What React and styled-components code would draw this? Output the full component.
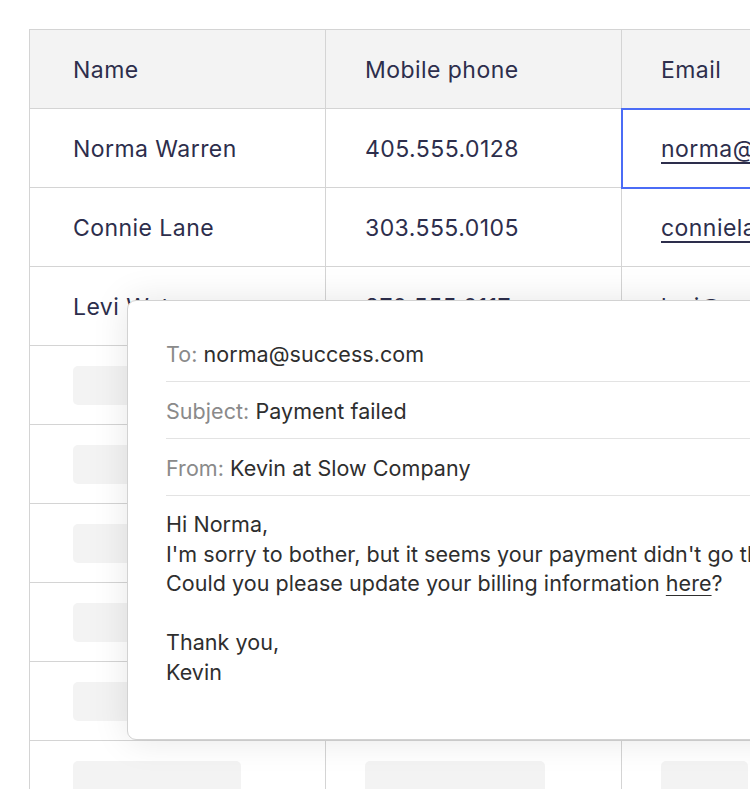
import React from "react";
import styled, { createGlobalStyle } from "styled-components";

const Global = createGlobalStyle`
  html, body { margin: 0; padding: 0; background: #ffffff; }
  body { font-family: Inter, "Noto Sans", sans-serif; }
  * { box-sizing: border-box; }
`;

const Page = styled.div`
  position: relative;
  width: 750px;
  height: 789px;
  overflow: hidden;
  padding: 29px 0 0 29px;
`;

const Table = styled.div`
  display: grid;
  grid-template-columns: repeat(3, 296px);
  width: max-content;
  border-top: 1px solid #d4d4d4;
  border-left: 1px solid #d4d4d4;
`;

const Cell = styled.div`
  position: relative;
  height: 79px;
  display: flex;
  align-items: center;
  padding: 1px 20px 0 ${(p) => (p.$first ? 43 : 39)}px;
  border-right: 1px solid #d4d4d4;
  border-bottom: 1px solid #d4d4d4;
  background: ${(p) => (p.$head ? "#f3f3f3" : "#ffffff")};
  color: #2d2e4c;
  font-size: 23px;
  letter-spacing: 0.45px;
  white-space: nowrap;
  ${(p) =>
    p.$selected &&
    `
    z-index: 1;
    outline: 2px solid #4b6cf6;
    outline-offset: -1px;
  `}
`;

const EmailLink = styled.span`
  text-decoration: underline;
  text-decoration-thickness: 1.5px;
  text-underline-offset: 5px;
`;

const Skeleton = styled.div`
  width: ${(p) => p.$w}px;
  height: 39px;
  border-radius: 5px;
  background: #f3f3f3;
`;

const Popup = styled.div`
  position: absolute;
  left: 127px;
  top: 300px;
  width: 720px;
  height: 440px;
  background: #ffffff;
  border: 1px solid #d2d2d2;
  border-radius: 9px;
  box-shadow: 0 0 36px rgba(0, 0, 0, 0.1);
  padding: 24px 0 0 38px;
  font-family: Inter, "Noto Sans", sans-serif;
  font-size: 21.5px;
  letter-spacing: 0.05px;
  color: #2e2e2e;
  z-index: 5;
`;

const Field = styled.div`
  padding: 17px 0 15px;
  line-height: 24px;
  border-bottom: 1px solid #e3e3e3;
  white-space: nowrap;
`;

const Label = styled.span`
  color: #8a8a8a;
`;

const Body = styled.div`
  padding-top: 14px;
  line-height: 29.6px;
  white-space: nowrap;
`;

const Link = styled.span`
  text-decoration: underline;
  text-decoration-thickness: 1px;
  text-underline-offset: 4px;
`;

const rows = [
  ["Norma Warren", "405.555.0128", "norma@success.com", true],
  ["Connie Lane", "303.555.0105", "connielane@success.com", false],
  ["Levi Watson", "270.555.0117", "levi@success.com", false],
];

export default function App() {
  return (
    <>
      <Global />
      <Page>
        <Table>
          <Cell $head $first>Name</Cell>
          <Cell $head>Mobile phone</Cell>
          <Cell $head>Email</Cell>
          {rows.map(([n, p, e, sel]) => (
            <React.Fragment key={n}>
              <Cell $first>{n}</Cell>
              <Cell>{p}</Cell>
              <Cell $selected={sel}>
                <EmailLink>{e}</EmailLink>
              </Cell>
            </React.Fragment>
          ))}
          {[0, 1, 2, 3, 4, 5].map((i) => (
            <React.Fragment key={i}>
              <Cell $first>
                <Skeleton $w={168} />
              </Cell>
              <Cell>
                <Skeleton $w={180} />
              </Cell>
              <Cell>
                <Skeleton $w={87} />
              </Cell>
            </React.Fragment>
          ))}
        </Table>
        <Popup>
          <Field>
            <Label>To: </Label>norma@success.com
          </Field>
          <Field>
            <Label>Subject: </Label>Payment failed
          </Field>
          <Field>
            <Label>From: </Label>Kevin at Slow Company
          </Field>
          <Body>
            Hi Norma,
            <br />
            I'm sorry to bother, but it seems your payment didn't go through.
            <br />
            Could you please update your billing information <Link>here</Link>?
            <br />
            <br />
            Thank you,
            <br />
            Kevin
          </Body>
        </Popup>
      </Page>
    </>
  );
}
